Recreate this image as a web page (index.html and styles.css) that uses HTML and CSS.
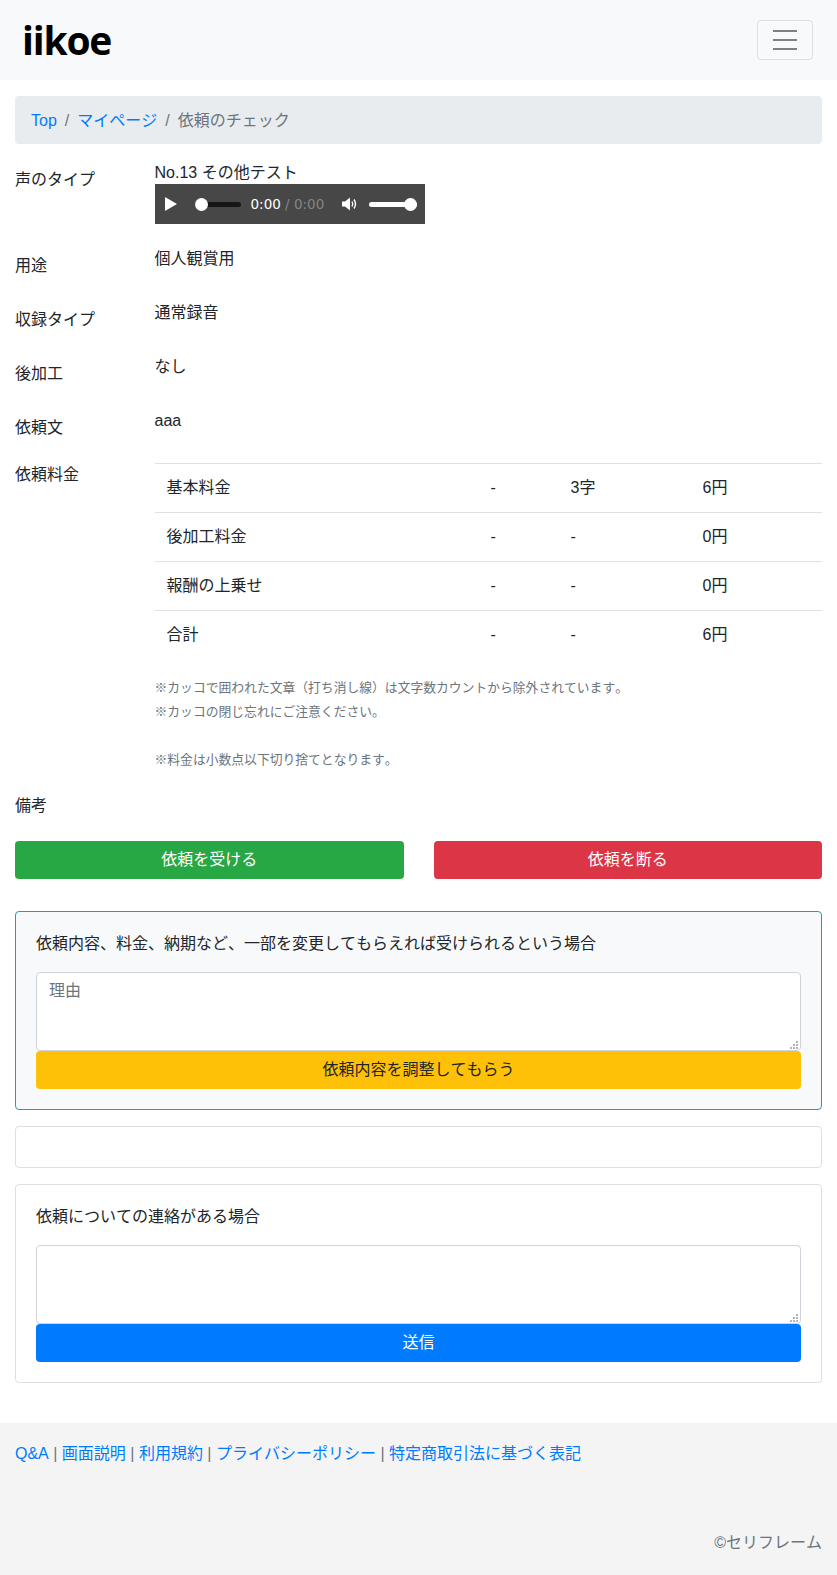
FILE: index.html
```html
<!DOCTYPE html>
<html lang="ja">
<head>
<meta charset="utf-8">
<title>iikoe</title>
<link rel="stylesheet" href="styles.css">
</head>
<body>
<nav class="navbar">
  <a class="brand">iikoe</a>
  <button class="toggler" aria-label="menu"><span class="bar"></span><span class="bar"></span><span class="bar"></span></button>
</nav>
<main class="container">
  <ol class="breadcrumb">
    <li><a class="top-link" href="#">Top</a></li>
    <li class="sep">/</li>
    <li><a href="#">マイページ</a></li>
    <li class="sep">/</li>
    <li class="current">依頼のチェック</li>
  </ol>
  <div class="row row-audio">
    <div class="label">声のタイプ</div>
    <div class="value">
      <div class="voice">No.13 その他テスト</div>
      <div class="player">
        <svg class="play" width="12" height="14" viewBox="0 0 12 14"><path d="M0 0 L12 7 L0 14 Z" fill="#fff"/></svg>
        <div class="track"><span class="knob"></span></div>
        <div class="time">0:00 <span class="dim">/ 0:00</span></div>
        <svg class="speaker" width="16" height="14" viewBox="0 0 16 14"><path d="M0 4.500 H3 L8 0.500 V13.500 L3 9.500 H0 Z" fill="#fff"/><path d="M10 4.500 Q11.500 7 10 9.500 M12 2.500 Q15 7 12 11.500" stroke="#fff" stroke-width="1.400" fill="none"/></svg>
        <div class="volume"><span class="knob"></span></div>
      </div>
    </div>
  </div>
  <div class="row"><div class="label">用途</div><div class="value">個人観賞用</div></div>
  <div class="row"><div class="label">収録タイプ</div><div class="value">通常録音</div></div>
  <div class="row"><div class="label">後加工</div><div class="value">なし</div></div>
  <div class="row"><div class="label">依頼文</div><div class="value">aaa</div></div>
  <div class="row row-fee">
    <div class="label">依頼料金</div>
    <div class="value">
      <table class="fee">
        <tr><td class="c1">基本料金</td><td class="c2">-</td><td class="c3">3字</td><td>6円</td></tr>
        <tr><td>後加工料金</td><td>-</td><td>-</td><td>0円</td></tr>
        <tr><td>報酬の上乗せ</td><td>-</td><td>-</td><td>0円</td></tr>
        <tr><td>合計</td><td>-</td><td>-</td><td>6円</td></tr>
      </table>
      <p class="note">※カッコで囲われた文章（打ち消し線）は文字数カウントから除外されています。<br>※カッコの閉じ忘れにご注意ください。<br><br>※料金は小数点以下切り捨てとなります。</p>
    </div>
  </div>
  <div class="row row-memo"><div class="label">備考</div><div class="value"></div></div>
  <div class="actions">
    <button class="btn btn-green">依頼を受ける</button>
    <button class="btn btn-red">依頼を断る</button>
  </div>
  <section class="card card-info">
    <p>依頼内容、料金、納期など、一部を変更してもらえれば受けられるという場合</p>
    <div class="area-wrap">
      <textarea class="area" placeholder="理由"></textarea>
      <svg class="grip" width="8" height="8" viewBox="0 0 8 8"><path d="M6 0h2v2H6zM3 3h2v2H3zM6 3h2v2H6zM0 6h2v2H0zM3 6h2v2H3zM6 6h2v2H6z" fill="#b4b4b4"/></svg>
    </div>
    <button class="btn btn-yellow">依頼内容を調整してもらう</button>
  </section>
  <section class="card card-empty"></section>
  <section class="card">
    <p>依頼についての連絡がある場合</p>
    <div class="area-wrap">
      <textarea class="area"></textarea>
      <svg class="grip" width="8" height="8" viewBox="0 0 8 8"><path d="M6 0h2v2H6zM3 3h2v2H3zM6 3h2v2H6zM0 6h2v2H0zM3 6h2v2H3zM6 6h2v2H6z" fill="#b4b4b4"/></svg>
    </div>
    <button class="btn btn-blue">送信</button>
  </section>
</main>
<footer class="footer">
  <div class="links"><a href="#">Q&amp;A</a> | <a href="#">画面説明</a> | <a href="#">利用規約</a> | <a href="#">プライバシーポリシー</a> | <a href="#">特定商取引法に基づく表記</a></div>
  <div class="copy">©セリフレーム</div>
</footer>
</body>
</html>
```
FILE: styles.css
```css
* { box-sizing: border-box; }
html, body { margin: 0; padding: 0; }
body {
  font-family: "Liberation Sans", "Noto Sans CJK JP", sans-serif;
  font-size: 16px;
  line-height: 24px;
  font-kerning: none;
  color: #212529;
  background: #fff;
}
a { color: #007bff; text-decoration: none; }
.navbar {
  height: 80px;
  background: #f8f9fa;
  display: flex;
  align-items: center;
  justify-content: space-between;
  padding: 0 24px 0 22px;
}
.brand {
  font-family: "Open Sans", sans-serif;
  font-weight: 700;
  font-size: 39px;
  letter-spacing: -1.200px;
  line-height: 44px;
  color: #000;
}
.toggler {
  width: 56px;
  height: 40px;
  padding: 0;
  background: transparent;
  border: 1px solid rgba(0,0,0,.1);
  border-radius: 4px;
  display: flex;
  flex-direction: column;
  align-items: center;
  justify-content: center;
  gap: 7px;
}
.bar { display: block; width: 24px; height: 2px; background: #808080; }
.container { padding: 16px 15px 24px; }
.breadcrumb {
  list-style: none;
  margin: 0 0 16px;
  padding: 13px 16px 11px;
  height: 48px;
  background: #e9ecef;
  border-radius: 4px;
  display: flex;
}
.top-link { font-kerning: normal; }
.sep { color: #6c757d; padding: 0 8px; }
.current { color: #6c757d; }
.row { display: flex; margin-bottom: 16px; }
.label { width: 139.500px; padding-top: 7px; padding-bottom: 7px; flex: none; }
.value { flex: 1; min-width: 0; }
.row-audio { margin-bottom: 23px; }
.row-audio .label { padding-top: 8px; padding-bottom: 6px; }
.voice { padding-top: 1px; line-height: 23px; }
.row-fee { margin-bottom: 0; }
.row-fee .label { padding-top: 0; }
.player {
  width: 270px;
  height: 40px;
  background: #474747;
  display: flex;
  align-items: center;
  color: #fff;
  font-family: "DejaVu Sans", sans-serif;
  font-size: 13.500px;
}
.play { margin-left: 10px; }
.track, .volume { position: relative; height: 5px; border-radius: 3px; }
.track { width: 46px; margin-left: 18px; background: #161616; }
.volume { width: 48px; margin-left: 11px; background: #fff; }
.knob { position: absolute; top: -4px; width: 13px; height: 13px; border-radius: 50%; background: #fff; }
.track .knob { left: 0; }
.volume .knob { right: 0; }
.time { margin-left: 10px; width: 91px; white-space: nowrap; }
.dim { color: #858585; }
.fee { width: 100%; border-collapse: collapse; margin-bottom: 17px; }
.fee td { padding: 12px; border-top: 1px solid #dee2e6; }
.c1 { width: 324px; }
.c2 { width: 80px; }
.c3 { width: 132px; }
.note { margin: 0 0 15px; font-size: 12.800px; color: #6c757d; }
.actions { display: flex; gap: 30px; margin-bottom: 32px; }
.btn {
  display: block;
  width: 100%;
  height: 38px;
  border: 1px solid transparent;
  border-radius: 4px;
  font: inherit;
  padding: 6px 12px;
  color: #fff;
}
.btn-green { background: #28a745; }
.btn-red { background: #dc3545; }
.btn-yellow { background: #ffc107; color: #212529; }
.btn-blue { background: #007bff; }
.card {
  border: 1px solid rgba(0,0,0,.125);
  border-radius: 4px;
  padding: 20px;
  margin-bottom: 16px;
}
.card p { margin: 0 0 16px; }
.card-info { background: #f8f9fa; border-color: #17a2b8; }
.card-empty { height: 42px; padding: 0; }
.area-wrap { position: relative; }
.area {
  display: block;
  width: 100%;
  height: 79px;
  padding: 6px 12px;
  border: 1px solid #ced4da;
  border-radius: 4px;
  font: inherit;
  color: #495057;
  background: #fff;
  margin: 0;
  resize: none;
}
.area::placeholder { color: #6c757d; opacity: 1; }
.grip { position: absolute; right: 3px; bottom: 2px; }
.footer {
  background: #f4f4f4;
  height: 152px;
  padding: 19px 15px 20px;
  color: #6c757d;
  display: flex;
  flex-direction: column;
  justify-content: space-between;
}
.copy { text-align: right; }
```
